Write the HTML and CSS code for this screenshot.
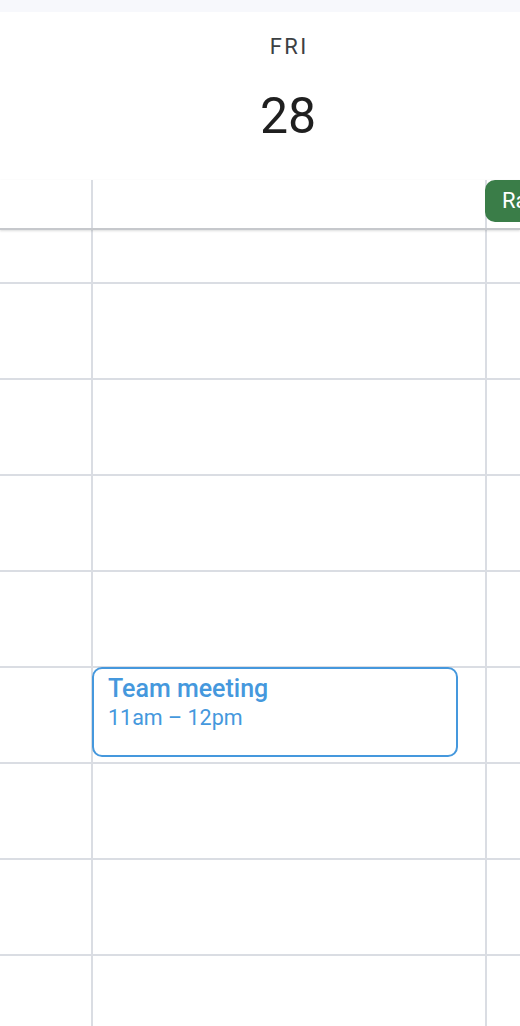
FILE: index.html
```html
<!DOCTYPE html>
<html lang="en">
<head>
<meta charset="utf-8">
<title>Calendar – Fri 28</title>
<link rel="stylesheet" href="styles.css">
</head>
<body>
<div class="topbar"></div>
<header class="dayhead">
  <div class="dayhead-label">
    <div class="dow">FRI</div>
    <div class="date">28</div>
  </div>
</header>
<div class="allday">
  <div class="cell gutter"></div>
  <div class="cell col"></div>
  <div class="cell col">
    <div class="allday-event">Rain check</div>
  </div>
</div>
<div class="grid">
  <div class="cell gutter"></div><div class="cell col"></div><div class="cell col"></div>
  <div class="cell gutter"></div><div class="cell col"></div><div class="cell col"></div>
  <div class="cell gutter"></div><div class="cell col"></div><div class="cell col"></div>
  <div class="cell gutter"></div><div class="cell col"></div><div class="cell col"></div>
  <div class="cell gutter"></div><div class="cell col"></div><div class="cell col"></div>
  <div class="cell gutter"></div>
  <div class="cell col">
    <div class="event">
      <div class="event-title">Team meeting</div>
      <div class="event-time">11am – 12pm</div>
    </div>
  </div>
  <div class="cell col"></div>
  <div class="cell gutter"></div><div class="cell col"></div><div class="cell col"></div>
  <div class="cell gutter"></div><div class="cell col"></div><div class="cell col"></div>
  <div class="cell gutter"></div><div class="cell col"></div><div class="cell col"></div>
</div>
</body>
</html>
```

FILE: styles.css
```css
html, body {
  margin: 0;
  padding: 0;
  height: 1026px;
  overflow: hidden;
  background: #ffffff;
  font-family: Roboto, "Noto Sans", Arial, sans-serif;
}

* {
  box-sizing: border-box;
}

.topbar {
  height: 12px;
  background: #f7f8fc;
}

.dayhead {
  height: 168px;
  padding-left: 91px;
  padding-top: 22px;
}

.dayhead-label {
  width: 394px;
  display: flex;
  flex-direction: column;
  align-items: center;
}

.dow {
  font-size: 22px;
  line-height: 26px;
  letter-spacing: 2.5px;
  padding-left: 2.5px;
  color: #3c4043;
}

.date {
  margin-top: 26px;
  font-size: 50px;
  line-height: 60px;
  color: #1f1f1f;
}

.allday {
  position: relative;
  z-index: 2;
  display: grid;
  grid-template-columns: 91px 394px 35px;
  height: 50px;
  border-bottom: 2px solid #c6c8cc;
  box-shadow: 0 1px 2px rgba(60, 64, 67, 0.18);
}

.cell.col {
  border-left: 2px solid #dadde3;
  position: relative;
}

.allday-event {
  position: absolute;
  top: 0;
  left: -2px;
  width: 120px;
  height: 42px;
  border-radius: 10px;
  background: #3a7d48;
  color: #ffffff;
  font-size: 22px;
  line-height: 42px;
  padding-left: 17px;
  white-space: nowrap;
}

.grid {
  display: grid;
  grid-template-columns: 91px 394px 35px;
  grid-template-rows: 54px repeat(8, 96px);
}

.grid .cell {
  border-bottom: 2px solid #dadde3;
}

.event {
  position: absolute;
  z-index: 1;
  top: -1px;
  left: -1px;
  width: 366px;
  height: 90px;
  border: 2px solid #4598dd;
  border-radius: 10px;
  background: #ffffff;
  padding: 5px 12px 0 14px;
  color: #4598dd;
}

.event-title {
  font-size: 25px;
  line-height: 30px;
  font-weight: 500;
}

.event-time {
  font-size: 21.5px;
  line-height: 28px;
}
```
